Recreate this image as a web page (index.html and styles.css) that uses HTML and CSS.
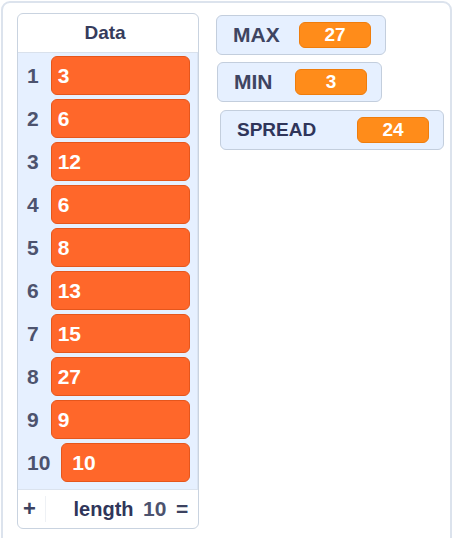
FILE: index.html
```html
<!DOCTYPE html>
<html lang="en">
<head>
<meta charset="utf-8">
<title>Monitors</title>
<link rel="stylesheet" href="styles.css">
</head>
<body>
<div class="stage">
  <div class="list-monitor">
    <div class="list-header">Data</div>
    <div class="list-body">
      <div class="row"><span class="idx">1</span><span class="item">3</span></div>
      <div class="row"><span class="idx">2</span><span class="item">6</span></div>
      <div class="row"><span class="idx">3</span><span class="item">12</span></div>
      <div class="row"><span class="idx">4</span><span class="item">6</span></div>
      <div class="row"><span class="idx">5</span><span class="item">8</span></div>
      <div class="row"><span class="idx">6</span><span class="item">13</span></div>
      <div class="row"><span class="idx">7</span><span class="item">15</span></div>
      <div class="row"><span class="idx">8</span><span class="item">27</span></div>
      <div class="row"><span class="idx">9</span><span class="item">9</span></div>
      <div class="row"><span class="idx">10</span><span class="item">10</span></div>
    </div>
    <div class="list-footer">
      <span class="add">+</span>
      <span class="length"><span class="length-label">length</span> <span class="length-num">10</span></span>
      <span class="resize">=</span>
    </div>
  </div>

  <div class="var-monitor var-max">
    <span class="var-label">MAX</span>
    <span class="var-value">27</span>
  </div>
  <div class="var-monitor var-min">
    <span class="var-label">MIN</span>
    <span class="var-value">3</span>
  </div>
  <div class="var-monitor var-spread">
    <span class="var-label">SPREAD</span>
    <span class="var-value">24</span>
  </div>
</div>
</body>
</html>
```

FILE: styles.css
```css
html, body {
  margin: 0;
  padding: 0;
  background: #ffffff;
  overflow: hidden;
}

body {
  font-family: "Liberation Sans", Arial, sans-serif;
  width: 455px;
  height: 538px;
}

.stage {
  position: relative;
  margin: 1px 0 0 1px;
  width: 451px;
  height: 560px;
  border: 2px solid #dce3ed;
  border-radius: 9px;
  box-sizing: border-box;
}

/* ---- list monitor ---- */
.list-monitor {
  position: absolute;
  left: 14px;
  top: 10px;
  width: 182px;
  height: 516px;
  box-sizing: border-box;
  border: 1px solid #c9d3e0;
  border-radius: 6px;
  background: #ffffff;
  display: flex;
  flex-direction: column;
  overflow: hidden;
}

.list-header {
  height: 38px;
  flex: none;
  border-bottom: 1px solid #d9e1ec;
  display: flex;
  align-items: center;
  justify-content: center;
  font-weight: bold;
  font-size: 19px;
  color: #363c5c;
  padding-right: 6px;
}

.list-body {
  flex: 1;
  background: #e6f0ff;
  padding-top: 3px;
  display: flex;
  flex-direction: column;
  gap: 4px;
  border-right: 1px solid #dbe4f2;
}

.row {
  display: flex;
  align-items: center;
  height: 39px;
  padding-left: 9px;
  padding-right: 7px;
}

.idx {
  min-width: 11px;
  margin-right: 12px;
  font-weight: bold;
  font-size: 21px;
  color: #4d536e;
  text-align: center;
}

.row:last-child .idx {
  margin-right: 11px;
}

.item {
  flex: 1;
  height: 39px;
  box-sizing: border-box;
  background: #ff672a;
  border: 1px solid #e5561c;
  border-radius: 6px;
  color: #ffffff;
  font-size: 21px;
  font-weight: bold;
  display: flex;
  align-items: center;
  padding-left: 6px;
}

.row:last-child .item {
  padding-left: 10px;
}

.list-footer {
  height: 38px;
  flex: none;
  border-top: 1px solid #dbe3ee;
  display: flex;
  align-items: center;
  font-weight: bold;
  font-size: 20px;
}

.add {
  width: 28px;
  box-sizing: border-box;
  padding-left: 5px;
  color: #3c4260;
  font-size: 22px;
  border-right: 1px solid #eef1f5;
}

.length {
  flex: 1;
  text-align: center;
  padding-left: 18px;
  white-space: nowrap;
}

.length-label {
  color: #30365a;
}

.length-num {
  color: #4d536e;
  margin-left: 4px;
  font-size: 21px;
}

.resize {
  width: 22px;
  color: #3c4260;
  font-size: 21px;
}

/* ---- variable monitors ---- */
.var-monitor {
  position: absolute;
  height: 40px;
  box-sizing: border-box;
  background: #e6f0ff;
  border: 1px solid #c3cedd;
  border-radius: 6px;
  display: flex;
  align-items: center;
  justify-content: space-between;
  padding: 0 14px 0 16px;
}

.var-max {
  left: 213px;
  top: 12px;
  width: 170px;
}

.var-min {
  left: 214px;
  top: 59px;
  width: 165px;
}

.var-spread {
  left: 217px;
  top: 107px;
  width: 224px;
}

.var-label {
  font-weight: bold;
  font-size: 21px;
  color: #3e4461;
}

.var-spread .var-label {
  color: #2f355a;
  font-size: 19px;
}

.var-value {
  width: 72px;
  height: 26px;
  box-sizing: border-box;
  background: #ff8c1a;
  border: 1px solid #ef7d0c;
  border-radius: 6px;
  color: #ffffff;
  font-size: 19px;
  font-weight: bold;
  display: flex;
  align-items: center;
  justify-content: center;
}
```
